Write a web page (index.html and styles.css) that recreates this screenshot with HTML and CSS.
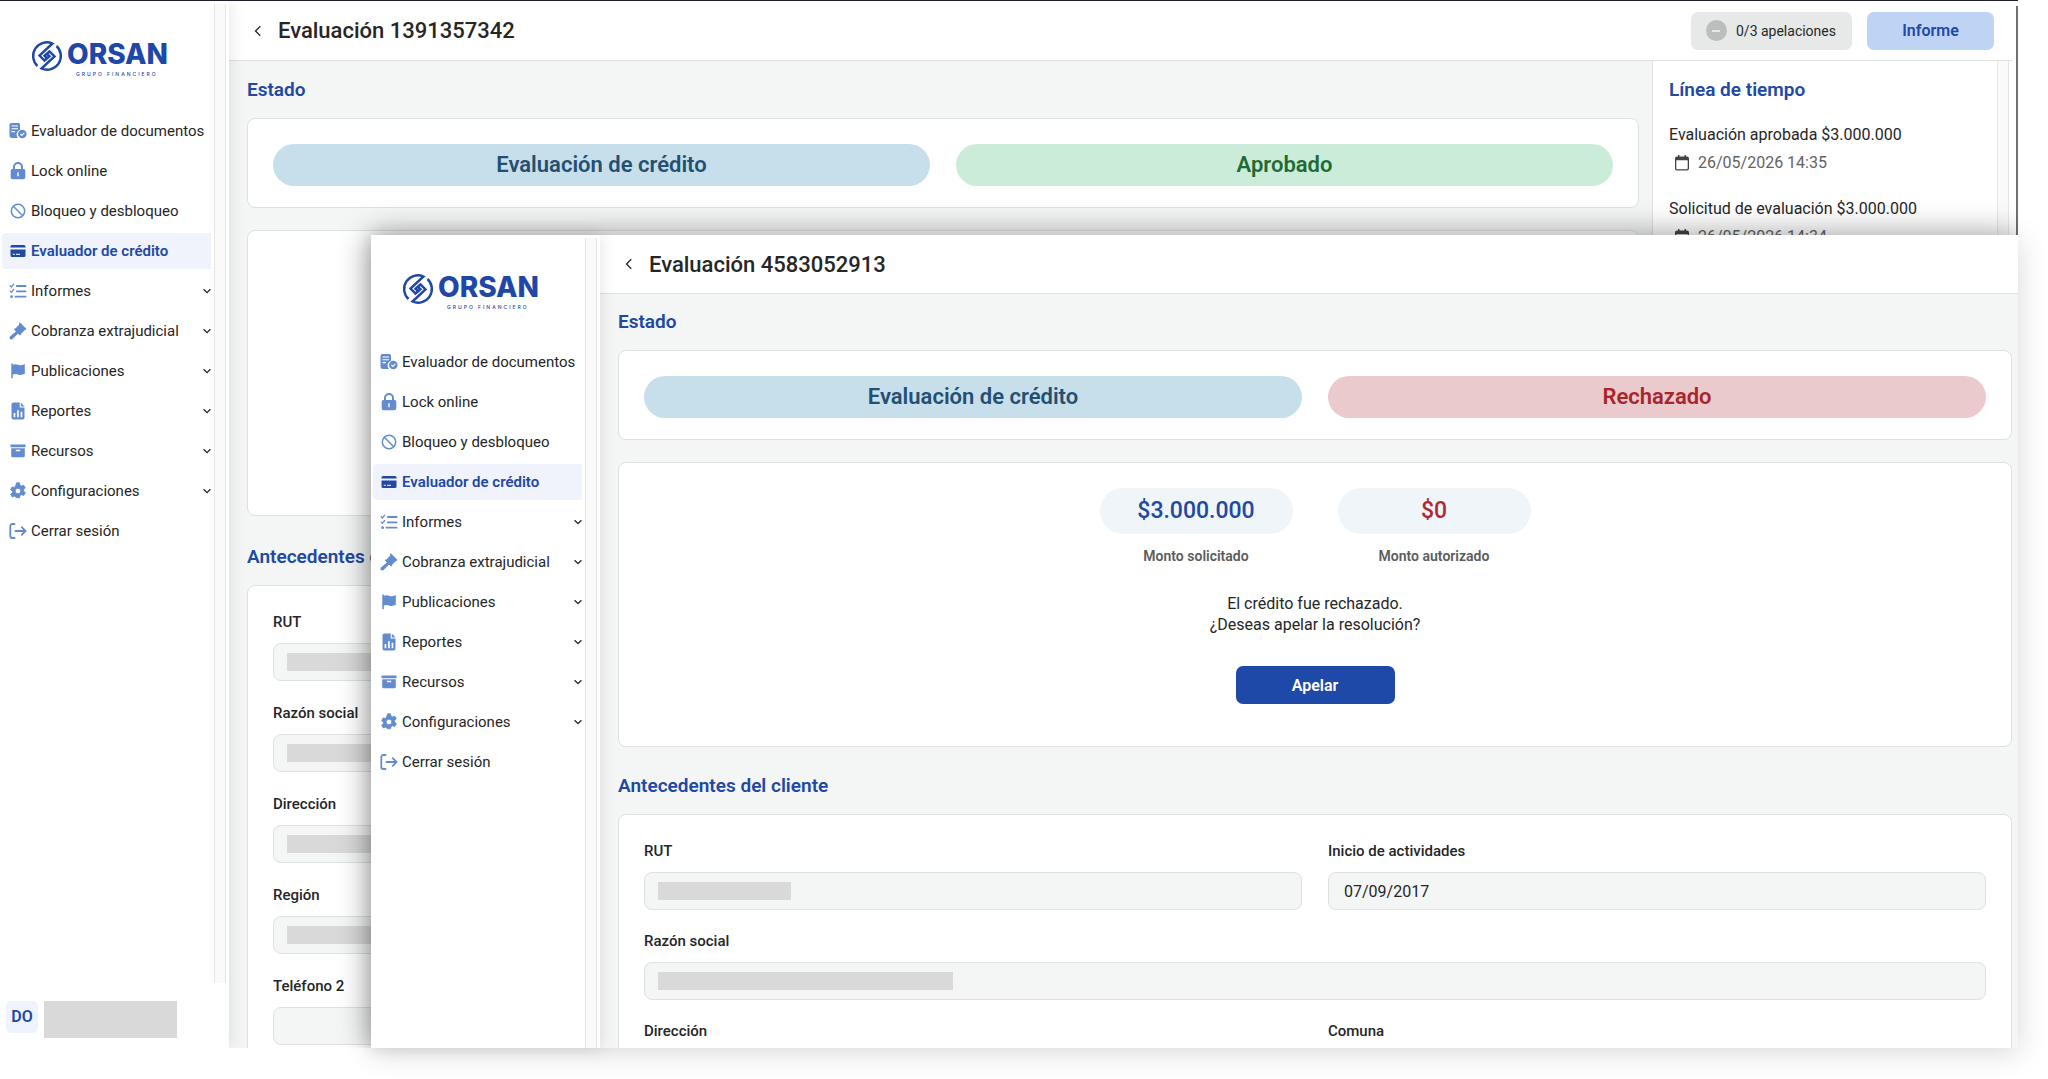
FILE: index.html
```html
<!DOCTYPE html>
<html lang="es">
<head>
<meta charset="utf-8">
<title>Orsan - Evaluador de crédito</title>
<link rel="stylesheet" href="styles.css">
</head>
<body>
<svg class="sprite" aria-hidden="true">
  <symbol id="i-logo" viewBox="0 0 32 32">
    <g fill="none" stroke="currentColor" stroke-width="2.400">
      <path d="M6.500 26A13.700 13.700 0 0 1 21.500 3.500L8.500 15.500L13.500 20.500L18.500 16.200L16 14"/>
      <path d="M25.500 6A13.700 13.700 0 0 1 10.500 28.500L23.500 16.500L18.500 11.500L13.500 15.800L16 18"/>
    </g>
  </symbol>
  <symbol id="i-doc" viewBox="0 0 18 18">
    <path fill="currentColor" d="M2.500 1h7A1.500 1.500 0 0 1 11 2.500v5.300A5 5 0 0 0 9 16H2.500A2.500 2.500 0 0 1 .5 13.500V3A2 2 0 0 1 2.500 1z"/>
    <path stroke="#fff" stroke-width="1.100" d="M2.500 4h6.500M2.500 6.800h6.500M2.500 9.600h3.500"/>
    <circle cx="13.300" cy="12" r="4.300" fill="currentColor"/>
    <path fill="none" stroke="#fff" stroke-width="1.100" d="M11.400 12l1.400 1.400 2.500-2.600"/>
  </symbol>
  <symbol id="i-lock" viewBox="0 0 18 18">
    <path fill="none" stroke="currentColor" stroke-width="2" d="M5 8V5a4 4 0 0 1 8 0v3"/>
    <path fill="currentColor" fill-rule="evenodd" d="M3.500 7h11A1.800 1.800 0 0 1 16.300 8.800v6.500a2 2 0 0 1-2 2H3.700a2 2 0 0 1-2-2V8.800A1.800 1.800 0 0 1 3.500 7zM8.300 10.200v4h1.400v-4z"/>
  </symbol>
  <symbol id="i-ban" viewBox="0 0 18 18">
    <g fill="none" stroke="currentColor" stroke-width="1.500"><circle cx="9" cy="9" r="6.700"/><path d="M4.300 4.300l9.400 9.400"/></g>
  </symbol>
  <symbol id="i-card" viewBox="0 0 18 18">
    <path fill="currentColor" d="M1.500 5V4.500A1.500 1.500 0 0 1 3 3h12a1.500 1.500 0 0 1 1.500 1.500V5.500h-15zM1.500 7.500h15v6A1.500 1.500 0 0 1 15 15H3a1.500 1.500 0 0 1-1.500-1.500z"/>
    <path stroke="#fff" stroke-width="1" d="M3.800 12.300h2M7 12.300h4"/>
  </symbol>
  <symbol id="i-list" viewBox="0 0 18 18">
    <g fill="none" stroke="currentColor" stroke-width="1.800" stroke-linecap="round"><path d="M7.800 4h8.800M7.800 9.300h8.800M6.500 14.700h10.100"/><path stroke-width="1.300" d="M1.200 3.800l1.200 1.200 2.300-2.800M1.200 9.100l1.200 1.200 2.300-2.800"/></g>
    <circle cx="2.600" cy="14.700" r="1.400" fill="currentColor"/>
  </symbol>
  <symbol id="i-gavel" viewBox="0 0 18 18">
    <path fill="currentColor" d="M10 .8l1-.3 6.300 6.300-.4 1-1 .2-4 4-.1 1.100-.9.400-5.900-5.900.4-1 1-.1 3.800-3.900zM7 9.200l2.200 2.200-1.500 1.500-.4.300-4.200 4.200-2.200-.1-.4-2.200 4.500-4 .3-.1z"/>
  </symbol>
  <symbol id="i-flag" viewBox="0 0 18 18">
    <path fill="currentColor" d="M2.300 1.500h1.500v1.300c2-1 3.700-.7 5.300-.1 2.200.9 4 .6 6.700-.7v9.800c-2.600 1.300-4.600 1.400-6.700.6-1.700-.6-3.300-.7-5.300.1v3.800H2.300z"/>
  </symbol>
  <symbol id="i-report" viewBox="0 0 18 18">
    <path fill="currentColor" fill-rule="evenodd" d="M4.300.5h6.400v5h4.800v10.200a1.800 1.800 0 0 1-1.800 1.800H4.300a1.800 1.800 0 0 1-1.800-1.800V2.300A1.800 1.800 0 0 1 4.300.5zM4.600 11v4.300h1.700V11zM8.100 8.300v7h1.700v-7zM11.600 9.800v5.500h1.700V9.800z"/>
    <path fill="currentColor" d="M11.800.6l3.700 3.800h-3.700z"/>
  </symbol>
  <symbol id="i-box" viewBox="0 0 18 18">
    <path fill="currentColor" fill-rule="evenodd" d="M1.500 2.500h15v2.700h-15zM2.200 6.200h13.600v7.500a1.500 1.500 0 0 1-1.500 1.500H3.700a1.500 1.500 0 0 1-1.500-1.500zM6.800 7.800v1.400h4.400V7.800z"/>
  </symbol>
  <symbol id="i-gear" viewBox="0 0 18 18">
    <path fill="currentColor" stroke="currentColor" stroke-width=".8" stroke-linejoin="round" fill-rule="evenodd" d="M7.500.8h3l.5 2.400 1.400.8 2.300-.8 1.600 2.700-1.800 1.700v1.400l1.900 1.700-1.600 2.700-2.400-.7-1.400.8-.5 2.300h-3L7 15l-1.400-.8-2.400.7-1.500-2.700 1.800-1.700V9.300L1.600 7.600 3.200 4.900l2.300.7L7 2.900zM9 6.200a2.800 2.800 0 1 0 0 5.600 2.800 2.800 0 0 0 0-5.600z"/>
  </symbol>
  <symbol id="i-exit" viewBox="0 0 18 18">
    <g fill="none" stroke="currentColor" stroke-width="1.800" stroke-linecap="round" stroke-linejoin="round"><path d="M5.500 2H3.300a2 2 0 0 0-2 2v10a2 2 0 0 0 2 2h2.200M6.500 9H16.500M12.700 5.200L16.500 9l-3.800 3.800"/></g>
  </symbol>
  <symbol id="i-down" viewBox="0 0 8 8">
    <path fill="none" stroke="currentColor" stroke-width="1.300" d="M.6 2.300L4 5.700l3.400-3.400"/>
  </symbol>
  <symbol id="i-back" viewBox="0 0 12 12">
    <path fill="none" stroke="currentColor" stroke-width="1.300" d="M8.300 1.200L3.500 6l4.800 4.800"/>
  </symbol>
  <symbol id="i-calendar" viewBox="0 0 14 16">
    <path fill="currentColor" fill-rule="evenodd" d="M3 0h1.500v1.500h5V0H11v1.500h1A2 2 0 0 1 14 3.500v10a2 2 0 0 1-2 2H2a2 2 0 0 1-2-2v-10a2 2 0 0 1 2-2h1zM1.300 5.300v8a.9.900 0 0 0 .9.900h9.600a.9.900 0 0 0 .9-.9v-8z"/>
  </symbol>
</svg>

<div class="stage">
  <section class="window window-back">
    <aside class="sidebar">
      <div class="brand">
        <svg class="brand-mark"><use href="#i-logo"/></svg>
        <div class="brand-text"><span class="brand-name">ORSAN</span><span class="brand-tag">GRUPO FINANCIERO</span></div>
      </div>
      <nav class="menu">
        <a class="item" href="#"><svg class="icon"><use href="#i-doc"/></svg>Evaluador de documentos</a>
        <a class="item" href="#"><svg class="icon"><use href="#i-lock"/></svg>Lock online</a>
        <a class="item" href="#"><svg class="icon"><use href="#i-ban"/></svg>Bloqueo y desbloqueo</a>
        <a class="item active" href="#"><svg class="icon"><use href="#i-card"/></svg>Evaluador de crédito</a>
        <button class="item"><svg class="icon"><use href="#i-list"/></svg>Informes<svg class="caret"><use href="#i-down"/></svg></button>
        <button class="item"><svg class="icon"><use href="#i-gavel"/></svg>Cobranza extrajudicial<svg class="caret"><use href="#i-down"/></svg></button>
        <button class="item"><svg class="icon"><use href="#i-flag"/></svg>Publicaciones<svg class="caret"><use href="#i-down"/></svg></button>
        <button class="item"><svg class="icon"><use href="#i-report"/></svg>Reportes<svg class="caret"><use href="#i-down"/></svg></button>
        <button class="item"><svg class="icon"><use href="#i-box"/></svg>Recursos<svg class="caret"><use href="#i-down"/></svg></button>
        <button class="item"><svg class="icon"><use href="#i-gear"/></svg>Configuraciones<svg class="caret"><use href="#i-down"/></svg></button>
        <a class="item" href="#"><svg class="icon"><use href="#i-exit"/></svg>Cerrar sesión</a>
      </nav>
      <div class="user"><span class="avatar">DO</span><span class="user-name"></span></div>
    </aside>
    <main class="main">
      <header class="topbar">
        <button class="back" aria-label="Volver"><svg><use href="#i-back"/></svg></button>
        <h1>Evaluación 1391357342</h1>
        <div class="actions">
          <span class="counter"><span class="counter-dot"></span>0/3 apelaciones</span>
          <button class="report">Informe</button>
        </div>
      </header>
      <div class="body">
        <div class="content">
          <h2>Estado</h2>
          <div class="card status">
            <span class="pill info">Evaluación de crédito</span>
            <span class="pill ok">Aprobado</span>
          </div>
          <div class="card resolution"></div>
          <h2 class="next">Antecedentes del cliente</h2>
          <form class="card client">
            <div class="field wide"><label for="b1">RUT</label><div class="box"><input id="b1" readonly><span class="mask"></span></div></div>
            <div class="field wide"><label for="b2">Razón social</label><div class="box"><input id="b2" readonly><span class="mask"></span></div></div>
            <div class="field wide"><label for="b3">Dirección</label><div class="box"><input id="b3" readonly><span class="mask"></span></div></div>
            <div class="field wide"><label for="b4">Región</label><div class="box"><input id="b4" readonly><span class="mask"></span></div></div>
            <div class="field wide"><label for="b5">Teléfono 2</label><div class="box"><input id="b5" readonly></div></div>
          </form>
        </div>
        <aside class="timeline">
          <h2>Línea de tiempo</h2>
          <div class="event"><p>Evaluación aprobada $3.000.000</p><time><svg><use href="#i-calendar"/></svg>26/05/2026 14:35</time></div>
          <div class="event"><p>Solicitud de evaluación $3.000.000</p><time><svg><use href="#i-calendar"/></svg>26/05/2026 14:34</time></div>
        </aside>
      </div>
    </main>
    <div class="page-scroll"></div>
  </section>

  <section class="window window-front">
    <aside class="sidebar">
      <div class="brand">
        <svg class="brand-mark"><use href="#i-logo"/></svg>
        <div class="brand-text"><span class="brand-name">ORSAN</span><span class="brand-tag">GRUPO FINANCIERO</span></div>
      </div>
      <nav class="menu">
        <a class="item" href="#"><svg class="icon"><use href="#i-doc"/></svg>Evaluador de documentos</a>
        <a class="item" href="#"><svg class="icon"><use href="#i-lock"/></svg>Lock online</a>
        <a class="item" href="#"><svg class="icon"><use href="#i-ban"/></svg>Bloqueo y desbloqueo</a>
        <a class="item active" href="#"><svg class="icon"><use href="#i-card"/></svg>Evaluador de crédito</a>
        <button class="item"><svg class="icon"><use href="#i-list"/></svg>Informes<svg class="caret"><use href="#i-down"/></svg></button>
        <button class="item"><svg class="icon"><use href="#i-gavel"/></svg>Cobranza extrajudicial<svg class="caret"><use href="#i-down"/></svg></button>
        <button class="item"><svg class="icon"><use href="#i-flag"/></svg>Publicaciones<svg class="caret"><use href="#i-down"/></svg></button>
        <button class="item"><svg class="icon"><use href="#i-report"/></svg>Reportes<svg class="caret"><use href="#i-down"/></svg></button>
        <button class="item"><svg class="icon"><use href="#i-box"/></svg>Recursos<svg class="caret"><use href="#i-down"/></svg></button>
        <button class="item"><svg class="icon"><use href="#i-gear"/></svg>Configuraciones<svg class="caret"><use href="#i-down"/></svg></button>
        <a class="item" href="#"><svg class="icon"><use href="#i-exit"/></svg>Cerrar sesión</a>
      </nav>
    </aside>
    <main class="main">
      <header class="topbar">
        <button class="back" aria-label="Volver"><svg><use href="#i-back"/></svg></button>
        <h1>Evaluación 4583052913</h1>
      </header>
      <div class="body">
        <div class="content">
          <h2>Estado</h2>
          <div class="card status">
            <span class="pill info">Evaluación de crédito</span>
            <span class="pill bad">Rechazado</span>
          </div>
          <div class="card resolution">
            <div class="amounts">
              <div class="amount"><strong>$3.000.000</strong><span>Monto solicitado</span></div>
              <div class="amount denied"><strong>$0</strong><span>Monto autorizado</span></div>
            </div>
            <p>El crédito fue rechazado.<br>¿Deseas apelar la resolución?</p>
            <button class="appeal">Apelar</button>
          </div>
          <h2 class="next">Antecedentes del cliente</h2>
          <form class="card client">
            <div class="field"><label for="f1">RUT</label><div class="box"><input id="f1" readonly><span class="mask"></span></div></div>
            <div class="field"><label for="f2">Inicio de actividades</label><div class="box"><input id="f2" value="07/09/2017" readonly></div></div>
            <div class="field wide"><label for="f3">Razón social</label><div class="box"><input id="f3" readonly><span class="mask mask-long"></span></div></div>
            <div class="field"><label for="f4">Dirección</label><div class="box"><input id="f4" readonly></div></div>
            <div class="field"><label for="f5">Comuna</label><div class="box"><input id="f5" readonly></div></div>
          </form>
        </div>
      </div>
    </main>
  </section>
</div>
</body>
</html>
```
FILE: styles.css
```css
:root {
  --blue: #2148a3;
  --brand: #1f47a8;
  --icon: #628bd0;
  --ink: #262626;
  --line: #dde1e0;
  --canvas: #f4f6f6;
  --mask: #d9d9d9;
}

*, ::before, ::after { box-sizing: border-box; }

body {
  margin: 0;
  background: #fff;
  color: var(--ink);
  font-family: Roboto, "Noto Sans", sans-serif;
  font-size: 15px;
}

h1, h2, p { margin: 0; }
button, input { font: inherit; color: inherit; }
button { border: 0; background: none; padding: 0; cursor: pointer; }
.sprite { display: none; }

.stage {
  position: relative;
  height: 100vh;
  overflow: hidden;
}

/* Two overlapping application windows */
.window {
  position: absolute;
  right: 30px;
  bottom: 31px;
  display: flex;
  background: #fff;
}

.window-back {
  --top-pad: 13px;
  --section-gap: 25px;
  --field-gap: 20px;
  --header: 60px;
  --brand-pad: 39px;
  --menu-gap: 33px;
  --resolution: 286px;
  --edge: 13px;
  left: 0;
  top: 0;
  border-top: 1px solid #20202a;
}

.window-front {
  --top-pad: 12px;
  --section-gap: 23px;
  --field-gap: 19px;
  --header: 59px;
  --brand-pad: 38px;
  --menu-gap: 31px;
  --resolution: 285px;
  --edge: 6px;
  left: 371px;
  top: 235px;
  box-shadow: 0 4px 28px rgba(0, 0, 0, 0.16);
}

/* The darker part of the shadow falls only on the window behind */
.window-back::after {
  content: "";
  position: absolute;
  left: 371px;
  top: 234px;
  right: 0;
  bottom: 0;
  box-shadow: 0 0 32px rgba(0, 0, 0, 0.3);
}
.window-back { overflow: hidden; }

/* Sidebar */
.sidebar {
  position: relative;
  z-index: 1;
  flex: none;
  display: flex;
  flex-direction: column;
  width: 229px;
  padding-top: var(--brand-pad);
  background: #fff;
  box-shadow: 0 0 16px rgba(0, 0, 0, 0.12);
}

.sidebar::after {
  content: "";
  position: absolute;
  top: 3px;
  right: 3px;
  bottom: 0;
  width: 12px;
  border: solid #e6e6e6;
  border-width: 0 1px;
  background: #fafafa;
}
.window-back .sidebar::after { bottom: 65px; }

.brand {
  display: flex;
  gap: 4px;
  padding-left: 31px;
  color: var(--brand);
}
.brand-mark { width: 32px; height: 32px; }
.brand-text { display: flex; flex-direction: column; }
.brand-name {
  font: 800 28px/28px Inter, sans-serif;
}
.brand-tag {
  padding-left: 9px;
  font: 500 5px/12px Inter, sans-serif;
  letter-spacing: 2px;
}

.menu {
  display: flex;
  flex-direction: column;
  gap: 4px;
  width: 211px;
  margin-top: var(--menu-gap);
  padding-left: 2px;
}

.item {
  display: flex;
  align-items: center;
  gap: 4px;
  height: 36px;
  padding-left: 7px;
  border-radius: 4px 0 0 4px;
  color: var(--ink);
  text-align: left;
  text-decoration: none;
  white-space: nowrap;
}
.item.active {
  background: #f0f3fb;
  color: var(--blue);
  font-weight: 600;
}
.icon { width: 18px; height: 18px; color: var(--icon); }
.active .icon { color: var(--blue); }
.caret { width: 8px; height: 8px; margin-left: auto; }

.user {
  display: flex;
  align-items: flex-start;
  gap: 6px;
  margin-top: auto;
  padding: 0 0 10px 6px;
}
.avatar {
  width: 32px;
  border-radius: 5px;
  background: #eff3fb;
  color: var(--blue);
  font-size: 16px;
  font-weight: 600;
  line-height: 32px;
  text-align: center;
}
.user-name { width: 133px; height: 37px; background: var(--mask); }

/* Main column */
.main {
  flex: 1;
  display: flex;
  flex-direction: column;
  min-width: 0;
  overflow: hidden;
}

.topbar {
  flex: none;
  display: flex;
  align-items: center;
  gap: 9px;
  height: var(--header);
  padding: 0 18px;
  border-bottom: 1px solid var(--line);
}
.back { width: 22px; height: 22px; }
.back svg { display: block; width: 12px; height: 12px; margin: auto; }
h1 { font-size: 22px; font-weight: 500; }

.actions { display: flex; gap: 15px; margin-left: auto; }
.counter {
  display: flex;
  align-items: center;
  gap: 9px;
  height: 38px;
  padding: 0 16px 0 15px;
  border-radius: 7px;
  background: #e7e9e9;
  font-size: 14px;
}
.counter-dot {
  display: grid;
  place-items: center;
  width: 21px;
  height: 21px;
  border-radius: 50%;
  background: #bcbdbd;
}
.counter-dot::before { content: ""; width: 8px; height: 2px; background: #e7e9e9; }
.report {
  width: 127px;
  height: 38px;
  border-radius: 7px;
  background: #bfd4f5;
  color: var(--blue);
  font-size: 16px;
  font-weight: 600;
}

.body {
  flex: 1;
  display: flex;
  min-height: 0;
  background: var(--canvas);
}
.content {
  flex: 1;
  padding: var(--top-pad) var(--edge) 0 18px;
}

h2 {
  margin-bottom: 12px;
  color: var(--blue);
  font-size: 19px;
  font-weight: 600;
  line-height: 32px;
}
h2.next { margin-top: var(--section-gap); }

.card {
  border: 1px solid var(--line);
  border-radius: 8px;
  background: #fff;
}

.status {
  display: grid;
  grid-template-columns: 1fr 1fr;
  gap: 26px;
  padding: 25px 25px 21px;
}
.pill {
  border-radius: 21px;
  font-size: 22px;
  font-weight: 600;
  line-height: 42px;
  text-align: center;
}
.info { background: #c7deeb; color: #235072; }
.ok { background: #cbecd9; color: #1f6b35; }
.bad { background: #ebcacd; color: #a8252b; }

.resolution {
  display: flex;
  flex-direction: column;
  align-items: center;
  min-height: var(--resolution);
  margin-top: 22px;
  padding-top: 25px;
  font-size: 16px;
  line-height: 21px;
  text-align: center;
}
.amounts { display: flex; gap: 45px; margin-bottom: 26px; }
.amount { display: flex; flex-direction: column; gap: 12px; width: 193px; }
.amount strong {
  border-radius: 23px;
  background: #f0f5fa;
  color: var(--blue);
  font-size: 23px;
  font-weight: 500;
  line-height: 46px;
}
.amount.denied strong { color: #b02a30; }
.amount span { color: #5c5c5c; font-size: 14px; font-weight: 600; }
.appeal {
  width: 159px;
  height: 38px;
  margin-top: 31px;
  border-radius: 7px;
  background: #1f49a8;
  color: #fff;
  font-weight: 600;
}

.client {
  display: grid;
  grid-template-columns: 1fr 1fr;
  gap: var(--field-gap) 26px;
  padding: 24px 25px;
}
.field { display: flex; flex-direction: column; gap: 9px; }
.wide { grid-column: 1 / -1; }
label { font-size: 15px; font-weight: 500; line-height: 24px; }
.box { position: relative; height: 38px; }
input {
  width: 100%;
  height: 100%;
  padding: 0 15px;
  border: 1px solid var(--line);
  border-radius: 8px;
  background: var(--canvas);
  font-size: 16px;
  outline: 0;
}
.mask {
  position: absolute;
  left: 14px;
  top: 10px;
  width: 133px;
  height: 18px;
  background: var(--mask);
}
.mask-long { width: 295px; }

/* Timeline */
.timeline {
  position: relative;
  flex: none;
  width: 360px;
  padding: 13px 30px 0 16px;
  border-left: 1px solid var(--line);
  background: #fff;
}
.timeline h2 { margin-bottom: 15px; }
.timeline::after {
  content: "";
  position: absolute;
  top: 0;
  right: 3px;
  bottom: 0;
  width: 12px;
  border: solid #e6e6e6;
  border-width: 0 1px;
  background: #fafafa;
}
.event { margin-bottom: 18px; font-size: 16px; line-height: 28px; }
.event time {
  display: flex;
  align-items: center;
  gap: 9px;
  padding-left: 6px;
  color: #636363;
}
.event svg { width: 14px; height: 16px; color: #444; }

.page-scroll {
  flex: none;
  width: 6px;
  margin-top: 5px;
  border-right: 2px solid #707070;
}
```
